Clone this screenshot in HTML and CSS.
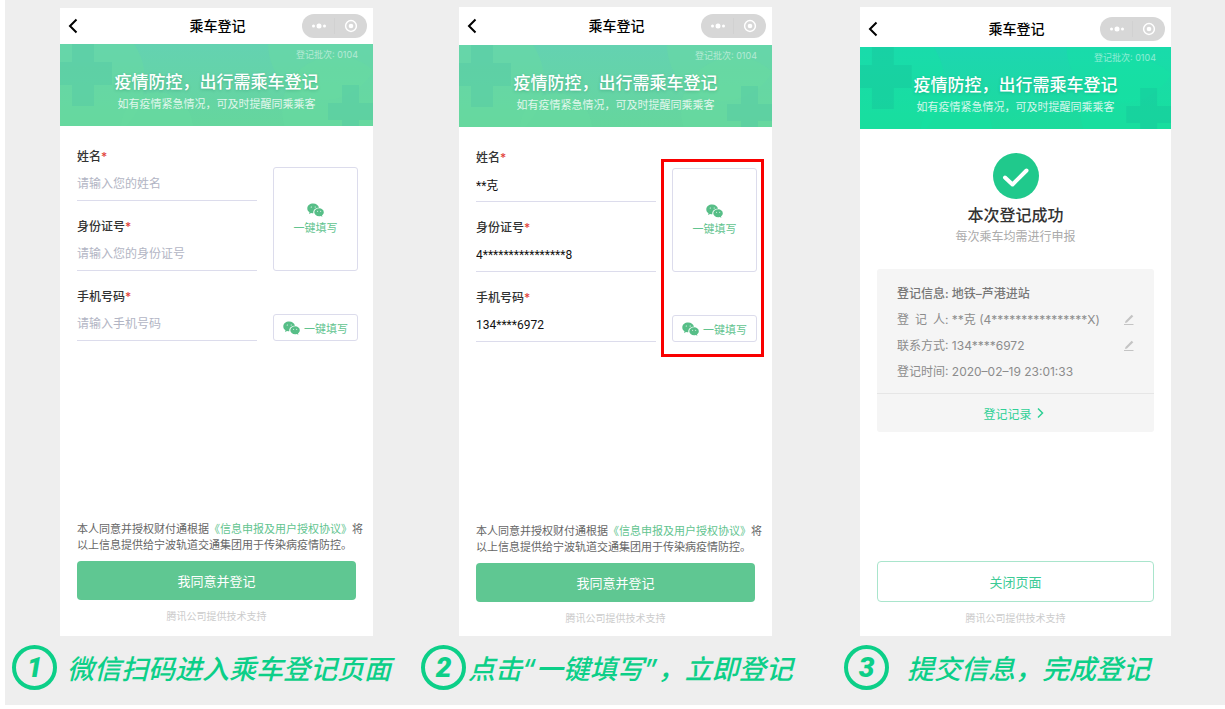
FILE: index.html
```html
<!DOCTYPE html>
<html lang="zh-CN">
  <head>
    <meta charset="UTF-8" />
    <meta name="viewport" content="width=device-width, initial-scale=1.0" />
    <title>乘车登记</title>
    <link rel="stylesheet" href="styles.css" />
  </head>
  <body>
    <svg class="sprite" width="0" height="0" aria-hidden="true">
      <symbol id="back" viewBox="0 0 10 16">
        <path d="M8.5 1.5 2 8l6.500 6.500" fill="none" stroke="#000" stroke-width="2" />
      </symbol>
      <symbol id="capsule" viewBox="0 0 65 24">
        <rect width="65" height="24" rx="12" fill="#d7d7d7" />
        <path d="M32.500 4v16" stroke="#d1d1d1" />
        <g fill="#fff">
          <circle cx="11.500" cy="12" r="1.500" />
          <circle cx="17" cy="12" r="2.500" />
          <circle cx="22.500" cy="12" r="1.500" />
          <circle cx="49" cy="12" r="2.300" />
        </g>
        <circle cx="49" cy="12" r="5.400" fill="none" stroke="#fff" stroke-width="1.500" />
      </symbol>
      <symbol id="art" viewBox="0 0 313 82">
        <g class="art-circle">
          <circle cx="20" cy="36" r="65" />
          <circle cx="97" cy="84" r="36" />
          <circle cx="264" cy="0" r="56" />
          <circle cx="276" cy="66" r="54" />
        </g>
        <g class="art-cross">
          <path d="M12 0h22v18h18v23H34v21H12V41H0V18h12z" />
          <path d="M282 41h17v18h14v17h-14v6h-17v-6h-14V59h14z" />
        </g>
      </symbol>
      <symbol id="wechat" viewBox="0 0 17 14">
        <path d="M6.200.5C2.800.5.3 2.600.3 5.400c0 1.600.8 2.900 2.200 3.800L2 11l2.100-1.100c.8.2 1.400.3 2.200.3C6 7 8.300 4.700 12 4.700 11.500 2.200 9.100.5 6.200.5z" fill="#57be87" />
        <path d="M16.800 9.200c0-2.200-2.100-3.900-4.700-3.900S7.300 7 7.300 9.200s2.100 4 4.800 4c.6 0 1.200-.1 1.700-.3l1.600.9-.4-1.500c1.100-.8 1.800-1.900 1.800-3.100z" fill="#57be87" />
        <g fill="#fff">
          <circle cx="4.300" cy="4" r=".6" />
          <circle cx="8.200" cy="4" r=".6" />
          <circle cx="10.600" cy="8.200" r=".5" />
          <circle cx="13.700" cy="8.200" r=".5" />
        </g>
      </symbol>
      <symbol id="pen" viewBox="0 0 10 12">
        <path d="M1 9 1.500 7 7.700.8 9.300 2.300 3 8.600z" fill="#c4c4c4" />
        <path d="M0 10.500h9.500" stroke="#c4c4c4" />
      </symbol>
    </svg>

    <main class="guide">
      <section class="step step-1">
        <div class="phone">
          <header class="nav">
            <button class="nav-back" aria-label="返回"><svg width="10" height="16"><use href="#back" /></svg></button>
            <h2>乘车登记</h2>
            <svg class="nav-capsule" width="65" height="24"><use href="#capsule" /></svg>
          </header>
          <div class="banner">
            <svg class="banner-art" viewBox="0 0 313 82" preserveAspectRatio="none"><use href="#art" /></svg>
            <p class="batch">登记批次: 0104</p>
            <h3>疫情防控，出行需乘车登记</h3>
            <p class="banner-sub">如有疫情紧急情况，可及时提醒同乘乘客</p>
          </div>
          <form class="form">
            <div class="fields">
              <div class="field">
                <label for="name-1">姓名<em>*</em></label>
                <input id="name-1" type="text" placeholder="请输入您的姓名" />
              </div>
              <div class="field">
                <label for="card-1">身份证号<em>*</em></label>
                <input id="card-1" type="text" placeholder="请输入您的身份证号" />
              </div>
              <div class="field">
                <label for="tel-1">手机号码<em>*</em></label>
                <input id="tel-1" type="tel" placeholder="请输入手机号码" />
              </div>
            </div>
            <div class="autofill">
              <button type="button" class="fill fill-tall"><svg width="17" height="14"><use href="#wechat" /></svg>一键填写</button>
              <button type="button" class="fill"><svg width="17" height="14"><use href="#wechat" /></svg>一键填写</button>
            </div>
          </form>
          <footer class="bottom">
            <p class="agree">本人同意并授权财付通根据<a href="#">《信息申报及用户授权协议》</a>将以上信息提供给宁波轨道交通集团用于传染病疫情防控。</p>
            <button class="submit">我同意并登记</button>
            <p class="support">腾讯公司提供技术支持</p>
          </footer>
        </div>
        <div class="caption">
          <span class="num">1</span>
          <p>微信扫码进入乘车登记页面</p>
        </div>
      </section>

      <section class="step step-2">
        <div class="phone">
          <header class="nav">
            <button class="nav-back" aria-label="返回"><svg width="10" height="16"><use href="#back" /></svg></button>
            <h2>乘车登记</h2>
            <svg class="nav-capsule" width="65" height="24"><use href="#capsule" /></svg>
          </header>
          <div class="banner">
            <svg class="banner-art" viewBox="0 0 313 82" preserveAspectRatio="none"><use href="#art" /></svg>
            <p class="batch">登记批次: 0104</p>
            <h3>疫情防控，出行需乘车登记</h3>
            <p class="banner-sub">如有疫情紧急情况，可及时提醒同乘乘客</p>
          </div>
          <form class="form">
            <div class="fields">
              <div class="field">
                <label for="name-2">姓名<em>*</em></label>
                <input id="name-2" type="text" value="**克" />
              </div>
              <div class="field">
                <label for="card-2">身份证号<em>*</em></label>
                <input id="card-2" type="text" value="4****************8" />
              </div>
              <div class="field">
                <label for="tel-2">手机号码<em>*</em></label>
                <input id="tel-2" type="tel" value="134****6972" />
              </div>
            </div>
            <div class="autofill marked">
              <button type="button" class="fill fill-tall"><svg width="17" height="14"><use href="#wechat" /></svg>一键填写</button>
              <button type="button" class="fill"><svg width="17" height="14"><use href="#wechat" /></svg>一键填写</button>
            </div>
          </form>
          <footer class="bottom">
            <p class="agree">本人同意并授权财付通根据<a href="#">《信息申报及用户授权协议》</a>将以上信息提供给宁波轨道交通集团用于传染病疫情防控。</p>
            <button class="submit">我同意并登记</button>
            <p class="support">腾讯公司提供技术支持</p>
          </footer>
        </div>
        <div class="caption">
          <span class="num">2</span>
          <p>点击“一键填写”，立即登记</p>
        </div>
      </section>

      <section class="step step-3">
        <div class="phone">
          <header class="nav">
            <button class="nav-back" aria-label="返回"><svg width="10" height="16"><use href="#back" /></svg></button>
            <h2>乘车登记</h2>
            <svg class="nav-capsule" width="65" height="24"><use href="#capsule" /></svg>
          </header>
          <div class="banner">
            <svg class="banner-art" viewBox="0 0 313 82" preserveAspectRatio="none"><use href="#art" /></svg>
            <p class="batch">登记批次: 0104</p>
            <h3>疫情防控，出行需乘车登记</h3>
            <p class="banner-sub">如有疫情紧急情况，可及时提醒同乘乘客</p>
          </div>
          <div class="result">
            <svg width="46" height="46" viewBox="0 0 46 46">
              <circle cx="23" cy="23" r="23" fill="#20c98c" />
              <path d="M12 24.500 19.500 31.500 33.500 17.500" fill="none" stroke="#fff" stroke-width="4" stroke-linecap="round" stroke-linejoin="round" />
            </svg>
            <h3>本次登记成功</h3>
            <p>每次乘车均需进行申报</p>
          </div>
          <div class="card">
            <ul>
              <li><b>登记信息: 地铁–芦港进站</b></li>
              <li>
                <span><span class="spread"><i>登</i><i>记</i><i>人</i></span>: **克 (4****************X)</span>
                <button aria-label="修改登记人"><svg width="10" height="12"><use href="#pen" /></svg></button>
              </li>
              <li>
                <span>联系方式: 134****6972</span>
                <button aria-label="修改联系方式"><svg width="10" height="12"><use href="#pen" /></svg></button>
              </li>
              <li>登记时间: 2020–02–19 23:01:33</li>
            </ul>
            <a class="records" href="#">登记记录
              <svg width="7" height="12" viewBox="0 0 7 12"><path d="M1 1.500 5.500 6 1 10.500" fill="none" stroke="#2fd096" stroke-width="1.500" /></svg>
            </a>
          </div>
          <footer class="bottom">
            <button class="submit close">关闭页面</button>
            <p class="support">腾讯公司提供技术支持</p>
          </footer>
        </div>
        <div class="caption">
          <span class="num">3</span>
          <p>提交信息，完成登记</p>
        </div>
      </section>
    </main>
  </body>
</html>
```

FILE: styles.css
```css
* {
  box-sizing: border-box;
}

body {
  margin: 0;
  background: #fff;
  color: #333;
  font-family: Inter, "Noto Sans CJK SC", sans-serif;
  font-size: 12px;
}

h2,
h3,
p,
ul {
  margin: 0;
  padding: 0;
}

em,
i {
  font-style: normal;
}

a {
  text-decoration: none;
}

button {
  padding: 0;
  border: 0;
  background: none;
  font-family: inherit;
  cursor: pointer;
}

svg {
  display: block;
  flex: none;
}

.sprite {
  position: absolute;
}

.guide {
  display: grid;
  grid-template-columns: 400fr 400fr 420fr;
  min-height: calc(100vh - 4px);
  margin: 0 0 4px 5px;
  background: #eee;
}

.step {
  display: flex;
  flex-direction: column;
  padding-top: 7px;
}

.step-1 {
  padding-top: 8px;
}

.phone {
  flex: 1;
  display: flex;
  flex-direction: column;
  margin: 0 32px 0 55px;
  background: #fff;
}

.step-2 .phone {
  margin: 0 33px 0 54px;
}

.step-3 .phone {
  margin-right: 54px;
}

/* top bar */

.nav {
  display: grid;
  grid-template-columns: 1fr auto 1fr;
  align-items: center;
  height: 36px;
  padding: 0 6px 0 8px;
}

.step-2 .nav {
  height: 38px;
}

.step-3 .nav {
  height: 40px;
  padding-top: 4px;
}

.nav h2 {
  color: #000;
  font-size: 14px;
  font-weight: 500;
  line-height: 20px;
}

.nav-back {
  justify-self: start;
}

.nav-capsule {
  justify-self: end;
}

/* banner */

.banner {
  --circle: #68dc9f;
  --cross: #52c8a4;
  position: relative;
  height: 82px;
  background: linear-gradient(#64d2b1, #65d69d);
  color: #fff;
  text-align: center;
}

.step-3 .banner {
  --circle: #14e3a2;
  --cross: #16c49c;
  background: linear-gradient(#1dd6b1, #1cdb9b);
}

.banner-art {
  position: absolute;
  width: 100%;
  height: 100%;
  left: 0;
  top: 0;
}

.art-circle {
  fill: var(--circle);
  fill-opacity: 0.4;
}

.art-cross {
  fill: var(--cross);
  fill-opacity: 0.4;
}

.banner p,
.banner h3 {
  position: relative;
}

.batch {
  padding: 4px 15px 0 0;
  font-size: 9px;
  line-height: 14px;
  text-align: right;
  opacity: 0.5;
}

.banner h3 {
  margin-top: 8px;
  font-size: 17px;
  font-weight: 500;
  line-height: 25px;
  text-shadow: 0 1px 3px rgba(0, 90, 60, 0.25);
}

.banner-sub {
  font-size: 11px;
  line-height: 18px;
  opacity: 0.8;
}

/* form */

.form {
  display: grid;
  grid-template-columns: 1fr 85px;
  gap: 16px;
  padding: 5px 15px 0 17px;
}

.field {
  display: flex;
  flex-direction: column;
  padding-top: 16px;
}

.field label {
  font-weight: 500;
  line-height: 20px;
}

.field em {
  color: #e2453c;
}

.field input {
  width: 100%;
  height: 34px;
  padding: 0;
  border: 0;
  border-bottom: 1px solid #dcdcec;
  background: none;
  color: #111;
  font-family: Roboto, "Noto Sans CJK SC", sans-serif;
  font-size: 12px;
  outline: none;
}

.field input::placeholder {
  color: #b2b5c4;
}

.autofill {
  position: relative;
  align-self: end;
  display: flex;
  flex-direction: column;
  gap: 43px;
}

.fill {
  display: flex;
  align-items: center;
  justify-content: center;
  gap: 4px;
  height: 27px;
  border: 1px solid #dcdcec;
  border-radius: 3px;
  color: #62c48f;
  font-size: 11px;
}

.fill-tall {
  flex-direction: column;
  gap: 2px;
  height: 104px;
}

.marked::after {
  content: "";
  position: absolute;
  inset: -9px -7px -15px -11px;
  border: 3px solid #f90000;
  pointer-events: none;
}

/* bottom of the screen */

.bottom {
  margin-top: auto;
  padding: 0 17px 11px;
}

.step-2 .bottom,
.step-3 .bottom {
  padding-bottom: 9px;
}

.agree {
  margin: 0 -10px 9px 0;
  color: #666;
  font-family: "Noto Sans CJK SC", sans-serif;
  font-size: 11px;
  line-height: 16px;
}

.agree a {
  color: #62c48f;
}

.submit {
  width: 100%;
  height: 39px;
  border-radius: 4px;
  background: #5fc792;
  color: #fff;
  font-size: 13px;
}

.close {
  height: 41px;
  border: 1px solid #a9e5cc;
  background: #fff;
  color: #3bcb96;
}

.support {
  margin-top: 7px;
  color: #ccc;
  font-size: 10px;
  line-height: 18px;
  text-align: center;
}

/* finished screen */

.result {
  display: flex;
  flex-direction: column;
  align-items: center;
  padding-top: 24px;
}

.result h3 {
  margin-top: 4px;
  font-size: 16px;
  font-weight: 500;
  line-height: 24px;
}

.result p {
  color: #aaa;
  line-height: 20px;
}

.card {
  margin: 22px 17px 0;
  border-radius: 3px;
  background: #f5f5f5;
  color: #8c8c8c;
}

.card ul {
  padding: 12px 20px 8px;
  border-bottom: 1px solid #e6e6e6;
  list-style: none;
}

.card li {
  display: flex;
  align-items: center;
  justify-content: space-between;
  line-height: 26px;
  white-space: nowrap;
}

.card b {
  color: #777;
  font-weight: 500;
}

.spread {
  display: inline-flex;
  justify-content: space-between;
  width: 48px;
}

.records {
  display: flex;
  align-items: center;
  justify-content: center;
  gap: 5px;
  height: 38px;
  padding-right: 4px;
  color: #2fd096;
}

/* captions */

.caption {
  display: flex;
  align-items: center;
  gap: 10px;
  height: 69px;
  padding: 0 0 6px 7px;
  color: #0ccf88;
}

.step-2 .caption {
  gap: 2px;
  padding-left: 16px;
}

.step-3 .caption {
  gap: 18px;
  padding-left: 39px;
}

.num {
  flex: none;
  width: 45px;
  height: 45px;
  border: 4px solid;
  border-radius: 50%;
  font-family: Roboto, sans-serif;
  font-size: 28px;
  font-style: italic;
  font-weight: 900;
  line-height: 37px;
  text-align: center;
}

.caption p {
  padding-top: 4px;
  font-size: 27px;
  font-style: italic;
  font-weight: 500;
  line-height: 40px;
  white-space: nowrap;
}
```
